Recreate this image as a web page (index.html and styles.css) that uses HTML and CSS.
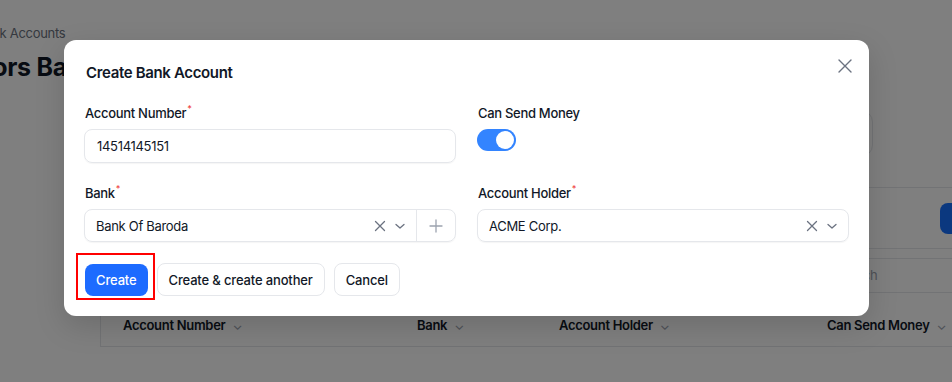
FILE: index.html
```html
<!DOCTYPE html>
<html lang="en">
<head>
    <meta charset="UTF-8">
    <meta name="viewport" content="width=device-width, initial-scale=1.0">
    <title>Bank Accounts</title>
    <link rel="stylesheet" href="styles.css">
</head>
<body>
    <!-- page behind the dialog -->
    <div class="page">
        <div class="breadcrumb">Bank Accounts</div>
        <h1 class="page-title">Vendors Bank Accounts</h1>

        <div class="content">
            <div class="widget"></div>

            <div class="table-card">
                <div class="toolbar">
                    <button class="new-btn">New</button>
                </div>
                <div class="filters">
                    <div class="search">Search</div>
                </div>
                <div class="table-head">
                    <span>Account Number <i class="sort">&#8964;</i></span>
                    <span>Bank <i class="sort">&#8964;</i></span>
                    <span>Account Holder <i class="sort">&#8964;</i></span>
                    <span>Can Send Money <i class="sort">&#8964;</i></span>
                </div>
            </div>
        </div>
    </div>

    <div class="overlay"></div>

    <div class="modal">
        <div class="modal-header">
            <h2>Create Bank Account</h2>
            <svg class="close" width="14" height="14" viewBox="0 0 14 14">
                <path d="M1 1L13 13M13 1L1 13" stroke="#6b7280" stroke-width="1.4" stroke-linecap="round"/>
            </svg>
        </div>

        <div class="form-grid">
            <div class="field">
                <label>Account Number<sup>*</sup></label>
                <div class="input">14514145151</div>
            </div>
            <div class="field">
                <label>Can Send Money</label>
                <div class="toggle"><span class="knob"></span></div>
            </div>
            <div class="field">
                <label>Bank<sup>*</sup></label>
                <div class="select">
                    <span class="value">Bank Of Baroda</span>
                    <svg class="clear" width="12" height="12" viewBox="0 0 12 12">
                        <path d="M1.5 1.5L10.5 10.5M10.5 1.5L1.5 10.5" stroke="#6b7280" stroke-width="1.3" stroke-linecap="round"/>
                    </svg>
                    <svg class="chevron" width="12" height="12" viewBox="0 0 12 12">
                        <path d="M2 4.5L6 8L10 4.5" fill="none" stroke="#6b7280" stroke-width="1.3" stroke-linecap="round" stroke-linejoin="round"/>
                    </svg>
                    <span class="add">
                        <svg width="14" height="14" viewBox="0 0 14 14">
                            <path d="M7 1V13M1 7H13" stroke="#9ca3af" stroke-width="1.3" stroke-linecap="round"/>
                        </svg>
                    </span>
                </div>
            </div>
            <div class="field">
                <label>Account Holder<sup>*</sup></label>
                <div class="select">
                    <span class="value">ACME Corp.</span>
                    <svg class="clear" width="12" height="12" viewBox="0 0 12 12">
                        <path d="M1.5 1.5L10.5 10.5M10.5 1.5L1.5 10.5" stroke="#6b7280" stroke-width="1.3" stroke-linecap="round"/>
                    </svg>
                    <svg class="chevron" width="12" height="12" viewBox="0 0 12 12">
                        <path d="M2 4.5L6 8L10 4.5" fill="none" stroke="#6b7280" stroke-width="1.3" stroke-linecap="round" stroke-linejoin="round"/>
                    </svg>
                </div>
            </div>
        </div>

        <div class="actions">
            <span class="highlight-box">
                <button class="btn primary">Create</button>
            </span>
            <button class="btn">Create &amp; create another</button>
            <button class="btn">Cancel</button>
        </div>
    </div>
</body>
</html>
```

FILE: styles.css
```css
* {
    margin: 0;
    padding: 0;
    box-sizing: border-box;
}

body {
    font-family: Inter, "Noto Sans", sans-serif;
    letter-spacing: -0.3px;
    background: #fff;
    color: #111827;
    width: 952px;
    height: 382px;
    overflow: hidden;
    position: relative;
}

/* background page */
.page {
    padding-top: 26px;
}

.breadcrumb {
    font-size: 13px;
    line-height: 14px;
    color: #6b7280;
    margin-left: -23px;
}

.page-title {
    font-size: 25px;
    font-weight: 700;
    line-height: 30px;
    margin-top: 12px;
    margin-left: -70px;
    white-space: nowrap;
}

.content {
    margin-left: 100px;
    width: 960px;
}

.widget {
    width: 773px;
    height: 47px;
    margin-top: 28px;
    border: 1px solid #e5e7eb;
    border-radius: 12px;
}

.table-card {
    margin-top: 30px;
    border-top: 1px solid #e5e7eb;
    border-left: 1px solid #e5e7eb;
}

.toolbar {
    display: flex;
    justify-content: flex-end;
    align-items: center;
    height: 61px;
    padding: 0 16px;
    border-bottom: 1px solid #e5e7eb;
}

.new-btn {
    width: 104px;
    height: 31px;
    border: none;
    border-radius: 8px;
    background: #1770ff;
}

.filters {
    display: flex;
    justify-content: flex-end;
    padding: 9px 16px 10px;
}

.search {
    width: 221px;
    height: 35px;
    border: 1px solid #e5e7eb;
    border-radius: 8px;
    padding: 0 12px;
    font-size: 13px;
    line-height: 33px;
    color: #9ca3af;
}

.table-head {
    display: grid;
    grid-template-columns: 294px 142px 268px 1fr;
    align-items: center;
    height: 44px;
    padding-left: 22px;
    border-bottom: 1px solid #e5e7eb;
    font-size: 13px;
    font-weight: 600;
    color: #111827;
}

.sort {
    font-style: normal;
    font-weight: 400;
    color: #9ca3af;
    margin-left: 4px;
}

.overlay {
    position: absolute;
    inset: 0;
    background: rgba(0, 0, 0, 0.5);
}

/* dialog */
.modal {
    position: absolute;
    left: 64px;
    top: 40px;
    width: 805px;
    height: 276px;
    background: #fff;
    border-radius: 12px;
    padding: 22px 20px 20px;
    box-shadow: 0 10px 30px rgba(0, 0, 0, 0.15);
}

.modal-header {
    display: flex;
    justify-content: space-between;
    align-items: center;
    height: 20px;
    padding-left: 2px;
}

.modal-header h2 {
    font-size: 15px;
    font-weight: 600;
    letter-spacing: -0.35px;
    color: #111827;
}

.close {
    margin-right: -3px;
    margin-top: -12px;
}

.form-grid {
    display: grid;
    grid-template-columns: 372px 372px;
    column-gap: 21px;
    row-gap: 22px;
    margin-top: 23px;
}

.field label {
    display: block;
    font-size: 13px;
    font-weight: 500;
    line-height: 16px;
    color: #111827;
    margin-bottom: 8px;
    padding-left: 1px;
}

.field sup {
    color: #ef4444;
    font-size: 9px;
    line-height: 0;
    vertical-align: 6px;
    margin-left: 1px;
}

.input {
    height: 34px;
    border: 1px solid #e5e7eb;
    border-radius: 8px;
    padding: 0 12px;
    font-size: 13px;
    line-height: 32px;
    color: #111827;
    box-shadow: 0 1px 1px rgba(0, 0, 0, 0.04);
}

.toggle {
    width: 39px;
    height: 22px;
    border-radius: 11px;
    background: #3384ff;
    margin-top: 1px;
    display: flex;
    align-items: center;
    justify-content: flex-end;
    padding: 2px;
}

.knob {
    width: 18px;
    height: 18px;
    border-radius: 50%;
    background: #fff;
}

.select {
    display: flex;
    align-items: center;
    height: 33px;
    border: 1px solid #e5e7eb;
    border-radius: 8px;
    font-size: 13px;
    color: #111827;
    box-shadow: 0 1px 1px rgba(0, 0, 0, 0.04);
}

.select .value {
    flex: 1;
    padding-left: 11px;
}

.clear {
    margin-right: 8px;
}

.chevron {
    margin-right: 10px;
}

.add {
    display: flex;
    align-items: center;
    justify-content: center;
    width: 39px;
    height: 100%;
    border-left: 1px solid #e5e7eb;
}

.actions {
    display: flex;
    align-items: center;
    gap: 9px;
    margin-top: 21px;
    padding-left: 1px;
}

.btn {
    height: 33px;
    padding: 0 11px;
    border: 1px solid #e5e7eb;
    border-radius: 8px;
    background: #fff;
    font-family: inherit;
    letter-spacing: -0.15px;
    font-size: 13px;
    font-weight: 500;
    color: #111827;
}

.btn.primary {
    height: 32px;
    border: none;
    padding: 0 11px;
    background: #1d6bff;
    color: #fff;
}

.highlight-box {
    position: relative;
    display: flex;
}

.highlight-box::after {
    content: "";
    position: absolute;
    left: -9px;
    top: -11px;
    right: -7px;
    bottom: -4px;
    border: 2px solid #ff0000;
}
```
